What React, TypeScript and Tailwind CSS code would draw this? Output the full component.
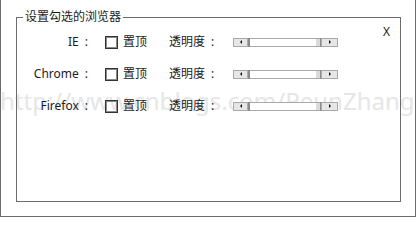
import React from "react";

const rows = [
  { name: "IE" },
  { name: "Chrome" },
  { name: "Firefox" },
];

function ScrollBar() {
  return (
    <div className="flex h-[9px] w-[105px]">
      {/* left arrow */}
      <div className="flex w-[15px] items-center justify-center border border-[#a9a9a9] bg-[#e6e6e6]">
        <span className="h-0 w-0 border-y-[2px] border-r-[2px] border-y-transparent border-r-[#111]" />
      </div>
      <div className="w-[2px] bg-[#8c8c8c]" />
      {/* track */}
      <div className="flex-1 border-y border-[#a9a9a9] bg-white" />
      <div className="w-[4px] border-y border-[#a9a9a9] bg-[#dadada]" />
      <div className="w-[1px] bg-[#8c8c8c]" />
      {/* right arrow */}
      <div className="flex w-[17px] items-center justify-center border border-[#a9a9a9] bg-[#e6e6e6]">
        <span className="h-0 w-0 border-y-[2px] border-l-[2px] border-y-transparent border-l-[#111]" />
      </div>
    </div>
  );
}

export default function App() {
  return (
    <div className="relative h-[217px] w-[416px] overflow-hidden border-x border-b border-[#6b6b6b] bg-white font-['Noto_Sans','Noto_Sans_CJK_SC',sans-serif] text-[12px] text-[#1c1c1c]">
      {/* watermark */}
      <div className="pointer-events-none absolute left-[-1px] top-[86px] whitespace-nowrap font-['Noto_Sans',sans-serif] text-[24px] leading-[30px] text-[#e6e6e6]">
        http://www.cnblogs.com/PeunZhang
      </div>

      <fieldset className="relative z-10 ml-[15px] mt-[10px] h-[192px] w-[385px] border border-[#6b6b6b]">
        <legend className="ml-[6px] px-[2px] leading-[14px]">设置勾选的浏览器</legend>

        <div className="flex flex-col pt-[2px]">
          {rows.map((row, i) => (
            <div key={row.name} className="flex h-[32px] items-center leading-[16px]">
              <span className="flex w-[71px] justify-end">
                <span>{row.name}</span>
                <span className="ml-[6px]">:</span>
              </span>
              <span className="ml-[17px] h-[13px] w-[13px] border border-[#333] shadow-[inset_0_0_0_1px_#8a8a8a]" />
              <span className="ml-[5px]">置顶</span>
              <span className="ml-[22px]">透明度</span>
              <span className="ml-[6px]">:</span>
              <div className="ml-[19px]">
                <ScrollBar />
              </div>
              {i === 0 && <span className="ml-auto mr-[10px] -mt-[2px] self-start">X</span>}
            </div>
          ))}
        </div>
      </fieldset>
    </div>
  );
}
